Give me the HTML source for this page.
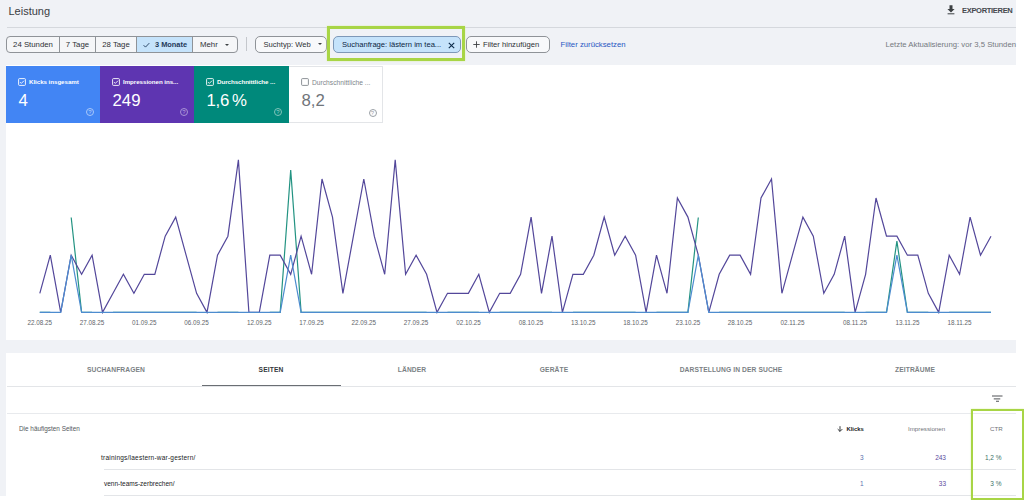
<!DOCTYPE html>
<html><head><meta charset="utf-8">
<style>
*{margin:0;padding:0;box-sizing:border-box}
html,body{width:1024px;height:500px;overflow:hidden;background:#fff;font-family:"Liberation Sans",sans-serif}
.abs{position:absolute;white-space:nowrap}
#page{position:absolute;left:0;top:0;width:1016px;height:496px;background:#f0f2f6}
.title{left:8.5px;top:3.8px;font-size:11px;color:#3a3d42;line-height:14px}
.hsep{left:7px;top:27px;width:1009px;height:1px;background:#d5d8dd}
.exp{left:962px;top:5.6px;font-size:7.55px;font-weight:bold;color:#45494e;letter-spacing:-0.33px;line-height:9px}
.seg{left:6px;top:36px;width:232px;height:16.5px;border:1px solid #8f9398;border-radius:4px;background:#f5f6f8;overflow:hidden}
.segi{position:absolute;top:0;height:100%;font-size:7.8px;color:#2d3034;line-height:16px;text-align:center}
.segd{position:absolute;top:0;width:1px;height:100%;background:#8f9398;z-index:1}
.chip{top:36px;height:16.5px;border:1px solid #8f9398;border-radius:5px;font-size:7.6px;color:#2d3034;line-height:16.5px}
.card{position:absolute;top:65.5px;height:57.3px}
.card .lbl{position:absolute;left:23px;top:12.6px;font-size:6.2px;line-height:8px;font-weight:bold;letter-spacing:-0.05px}
.card .val{position:absolute;left:12.5px;top:25.2px;font-size:16.8px;line-height:20px}
.cb{position:absolute;left:13.5px;top:14px;width:6px;height:6px;border:0.9px solid;border-radius:1px}
.help{position:absolute;top:42.5px;width:8px;height:8px;border:0.9px solid;border-radius:50%;font-size:6px;line-height:6.5px;text-align:center}
.tab{position:absolute;top:365px;font-size:6.7px;color:#7b7f84;font-weight:bold;transform:translateX(-50%);line-height:9px;letter-spacing:0.1px}
.th{top:425px;font-size:6.2px;color:#6f7378;line-height:8px}
.td{font-size:6.5px;line-height:8px}
</style></head><body>
<div id="page"></div>
<div class="abs title">Leistung</div>
<div class="abs hsep"></div>
<svg class="abs" style="left:946px;top:5px" width="10" height="10" viewBox="0 0 10 10"><path d="M3.5 0.3h3v3.8h2.1L5 7.6 1.4 4.1h2.1z" fill="#3c4043"/><rect x="1.6" y="8.3" width="6.8" height="1" fill="#3c4043"/></svg>
<div class="abs exp">EXPORTIEREN</div>

<div class="abs seg">
  <div class="segi" style="left:0;width:52px">24 Stunden</div>
  <div class="segd" style="left:51.5px"></div>
  <div class="segi" style="left:53px;width:35px">7 Tage</div>
  <div class="segd" style="left:87.6px"></div>
  <div class="segi" style="left:89px;width:40px">28 Tage</div>
  <div class="segd" style="left:128.6px"></div>
  <div class="segi" style="left:129px;width:56.5px;background:#c5e3fb;font-weight:bold;color:#1f3a5a"><svg style="position:absolute;left:6.5px;top:5px" width="7" height="6" viewBox="0 0 7 6"><path d="M0.6 3.2l1.9 1.9L6.3 1.1" fill="none" stroke="#1f3a5a" stroke-width="0.9"/></svg><span style="position:absolute;left:19px;font-size:7.4px">3 Monate</span></div>
  <div class="segd" style="left:185.3px"></div>
  <div class="segi" style="left:187px;width:45px;text-align:left;padding-left:6px">Mehr <span style="position:absolute;left:31px;top:6.5px;width:0;height:0;border-left:2.2px solid transparent;border-right:2.2px solid transparent;border-top:2.2px solid #3c4043"></span></div>
</div>
<div class="abs" style="left:246px;top:37px;width:1px;height:14px;background:#c4c7cc"></div>
<div class="abs chip" style="left:254.5px;width:72.5px;background:#f8f9fb;padding-left:8px">Suchtyp: Web<span style="position:absolute;left:62px;top:6px;width:0;height:0;border-left:2.2px solid transparent;border-right:2.2px solid transparent;border-top:2.2px solid #3c4043"></span></div>
<div class="abs" style="left:326.5px;top:25.5px;width:138px;height:35px;border:3px solid #a8d546;box-shadow:0 0 1.5px #d9efa0"></div>
<div class="abs chip" style="left:333px;width:127.5px;background:#c5e3fb;border-color:#7d98b8;color:#0a2342;padding-left:8px">Suchanfrage: lästern im tea...<svg style="position:absolute;left:113.8px;top:4.8px" width="7" height="7" viewBox="0 0 7 7"><path d="M0.8 0.8l5.4 5.4M6.2 0.8L0.8 6.2" stroke="#0b2a4a" stroke-width="1.1"/></svg></div>
<div class="abs chip" style="left:465.5px;width:84px;background:#f8f9fb;padding-left:16.5px"><svg style="position:absolute;left:6px;top:4px" width="7" height="7" viewBox="0 0 7 7"><path d="M3.5 0.3v6.4M0.3 3.5h6.4" stroke="#3c4043" stroke-width="0.9"/></svg>Filter hinzufügen</div>
<div class="abs" style="left:560.5px;top:40px;font-size:7.75px;color:#1f57c3;line-height:9px">Filter zurücksetzen</div>
<div class="abs" style="left:885.5px;top:40px;font-size:7.75px;color:#75797e;line-height:9px">Letzte Aktualisierung: vor 3,5 Stunden</div>

<!-- chart card -->
<div class="abs" style="left:6px;top:65px;width:1010px;height:275px;background:#fff"></div>
<div class="card" style="left:6px;width:94px;background:#4285f4;color:#fff">
  <svg style="position:absolute;left:12.2px;top:12.4px" width="8" height="8" viewBox="0 0 8 8"><rect x="0.6" y="0.6" width="6.8" height="6.8" rx="0.8" fill="none" stroke="#fff" stroke-width="0.9"/><path d="M2 4.1l1.3 1.3L6 2.7" fill="none" stroke="#fff" stroke-width="0.9"/></svg><div class="lbl">Klicks insgesamt</div><div class="val">4</div><div class="help" style="left:79.8px;border-color:#a9c8fa;color:#b9d2fb">?</div>
</div>
<div class="card" style="left:100px;width:94px;background:#5e35b1;color:#fff">
  <svg style="position:absolute;left:12.2px;top:12.4px" width="8" height="8" viewBox="0 0 8 8"><rect x="0.6" y="0.6" width="6.8" height="6.8" rx="0.8" fill="none" stroke="#fff" stroke-width="0.9"/><path d="M2 4.1l1.3 1.3L6 2.7" fill="none" stroke="#fff" stroke-width="0.9"/></svg><div class="lbl">Impressionen ins...</div><div class="val">249</div><div class="help" style="left:79.8px;border-color:#a993d6;color:#b8a6de">?</div>
</div>
<div class="card" style="left:194px;width:95px;background:#00897b;color:#fff">
  <svg style="position:absolute;left:12.2px;top:12.4px" width="8" height="8" viewBox="0 0 8 8"><rect x="0.6" y="0.6" width="6.8" height="6.8" rx="0.8" fill="none" stroke="#fff" stroke-width="0.9"/><path d="M2 4.1l1.3 1.3L6 2.7" fill="none" stroke="#fff" stroke-width="0.9"/></svg><div class="lbl">Durchschnittliche ...</div><div class="val" style="letter-spacing:-0.3px;word-spacing:-1.3px">1,6 %</div><div class="help" style="left:79.8px;border-color:#80c4ba;color:#99cfc7">?</div>
</div>
<div class="card" style="left:289px;width:93.5px;background:#fff;color:#5f6368;border:1px solid #e3e5e8;border-left:none">
  <svg style="position:absolute;left:12.2px;top:11.8px" width="8" height="8" viewBox="0 0 8 8"><rect x="0.6" y="0.6" width="6.8" height="6.8" rx="0.8" fill="none" stroke="#80868b" stroke-width="0.9"/></svg><div class="lbl" style="color:#80868b;font-weight:normal;font-size:6.7px;letter-spacing:0;top:12.2px">Durchschnittliche ...</div><div class="val" style="color:#70757a;top:24.5px">8,2</div><div class="help" style="left:79.5px;top:42px;border-color:#9aa0a6;color:#9aa0a6">?</div>
</div>

<svg class="abs" style="left:0;top:0" width="1024" height="340" viewBox="0 0 1024 340">
<g fill="none" stroke-linejoin="miter" stroke-width="1.2">
<path d="M39.8,312.4 L50.3,312.4 M71.2,217.5 L81.6,312.4 L92.1,312.4 M113.0,312.4 L123.4,312.4 L133.9,312.4 L144.3,312.4 L154.8,312.4 L165.2,312.4 L175.7,312.4 L186.1,312.4 L196.6,312.4 M217.5,312.4 L227.9,312.4 L238.4,312.4 M269.8,312.4 L280.2,312.4 L290.7,170.1 L301.1,312.4 L311.6,312.4 L322.0,312.4 L332.5,312.4 L342.9,312.4 L353.4,312.4 L363.8,312.4 L374.3,312.4 L384.7,312.4 L395.2,312.4 L405.6,312.4 L416.1,312.4 L426.6,312.4 M447.5,312.4 L457.9,312.4 L468.4,312.4 L478.8,312.4 M499.7,312.4 L510.2,312.4 L520.6,312.4 L531.1,312.4 L541.5,312.4 L552.0,312.4 M572.9,312.4 L583.3,312.4 L593.8,312.4 L604.2,312.4 L614.7,312.4 L625.2,312.4 L635.6,312.4 M656.5,312.4 L667.0,312.4 L677.4,312.4 L687.9,312.4 L698.3,217.5 M719.2,312.4 L729.7,312.4 L740.1,312.4 L750.6,312.4 L761.0,312.4 L771.5,312.4 L781.9,312.4 L792.4,312.4 L802.9,312.4 L813.3,312.4 L823.8,312.4 L834.2,312.4 L844.7,312.4 M865.6,312.4 L876.0,312.4 L886.5,312.4 L896.9,241.2 L907.4,312.4 L917.8,312.4 L928.3,312.4 M949.2,312.4 L959.6,312.4 L970.1,312.4 L980.5,312.4 L991.0,312.4" stroke="#239382"/>
<polyline points="39.8,293.3 50.3,255.2 60.7,312.4 71.2,255.2 81.6,274.3 92.1,255.2 102.5,312.4 113.0,293.3 123.4,274.3 133.9,293.3 144.3,274.3 154.8,274.3 165.2,236.2 175.7,217.1 186.1,255.2 196.6,293.3 207.0,312.4 217.5,255.2 227.9,236.2 238.4,159.9 248.9,312.4 259.3,312.4 269.8,255.2 280.2,255.2 290.7,274.3 301.1,236.2 311.6,274.3 322.0,179.0 332.5,217.1 342.9,293.3 353.4,236.2 363.8,179.0 374.3,236.2 384.7,274.3 395.2,159.9 405.6,274.3 416.1,255.2 426.6,274.3 437.0,312.4 447.5,293.3 457.9,293.3 468.4,293.3 478.8,274.3 489.3,312.4 499.7,293.3 510.2,293.3 520.6,274.3 531.1,217.1 541.5,293.3 552.0,236.2 562.4,312.4 572.9,274.3 583.3,274.3 593.8,255.2 604.2,217.1 614.7,255.2 625.2,236.2 635.6,255.2 646.1,312.4 656.5,255.2 667.0,293.3 677.4,198.0 687.9,217.1 698.3,255.2 708.8,312.4 719.2,274.3 729.7,255.2 740.1,255.2 750.6,274.3 761.0,198.0 771.5,179.0 781.9,293.3 792.4,255.2 802.9,217.1 813.3,236.2 823.8,293.3 834.2,274.3 844.7,236.2 855.1,312.4 865.6,274.3 876.0,198.0 886.5,236.2 896.9,236.2 907.4,255.2 917.8,255.2 928.3,293.3 938.7,312.4 949.2,255.2 959.6,274.3 970.1,217.1 980.5,255.2 991.0,236.2" stroke="#53479a"/>
<polyline points="39.8,312.4 50.3,312.4 60.7,312.4 71.2,255.2 81.6,312.4 92.1,312.4 102.5,312.4 113.0,312.4 123.4,312.4 133.9,312.4 144.3,312.4 154.8,312.4 165.2,312.4 175.7,312.4 186.1,312.4 196.6,312.4 207.0,312.4 217.5,312.4 227.9,312.4 238.4,312.4 248.9,312.4 259.3,312.4 269.8,312.4 280.2,312.4 290.7,255.2 301.1,312.4 311.6,312.4 322.0,312.4 332.5,312.4 342.9,312.4 353.4,312.4 363.8,312.4 374.3,312.4 384.7,312.4 395.2,312.4 405.6,312.4 416.1,312.4 426.6,312.4 437.0,312.4 447.5,312.4 457.9,312.4 468.4,312.4 478.8,312.4 489.3,312.4 499.7,312.4 510.2,312.4 520.6,312.4 531.1,312.4 541.5,312.4 552.0,312.4 562.4,312.4 572.9,312.4 583.3,312.4 593.8,312.4 604.2,312.4 614.7,312.4 625.2,312.4 635.6,312.4 646.1,312.4 656.5,312.4 667.0,312.4 677.4,312.4 687.9,312.4 698.3,255.2 708.8,312.4 719.2,312.4 729.7,312.4 740.1,312.4 750.6,312.4 761.0,312.4 771.5,312.4 781.9,312.4 792.4,312.4 802.9,312.4 813.3,312.4 823.8,312.4 834.2,312.4 844.7,312.4 855.1,312.4 865.6,312.4 876.0,312.4 886.5,312.4 896.9,255.2 907.4,312.4 917.8,312.4 928.3,312.4 938.7,312.4 949.2,312.4 959.6,312.4 970.1,312.4 980.5,312.4 991.0,312.4" stroke="#4d8ccf"/>
</g>
<g font-family="Liberation Sans" font-size="6.3" fill="#62666b" text-anchor="middle"><text x="39.8" y="325.0">22.08.25</text><text x="92.1" y="325.0">27.08.25</text><text x="144.3" y="325.0">01.09.25</text><text x="196.6" y="325.0">06.09.25</text><text x="259.3" y="325.0">12.09.25</text><text x="311.6" y="325.0">17.09.25</text><text x="363.8" y="325.0">22.09.25</text><text x="416.1" y="325.0">27.09.25</text><text x="468.4" y="325.0">02.10.25</text><text x="531.1" y="325.0">08.10.25</text><text x="583.3" y="325.0">13.10.25</text><text x="635.6" y="325.0">18.10.25</text><text x="687.9" y="325.0">23.10.25</text><text x="740.1" y="325.0">28.10.25</text><text x="792.4" y="325.0">02.11.25</text><text x="855.1" y="325.0">08.11.25</text><text x="907.4" y="325.0">13.11.25</text><text x="959.6" y="325.0">18.11.25</text></g>
</svg>

<!-- table card -->
<div class="abs" style="left:6px;top:352.8px;width:1010px;height:143.2px;background:#fff"></div>
<div class="abs" style="left:6.5px;top:385.7px;width:1009.5px;height:1px;background:#e3e5e8"></div>
<div class="abs" style="left:201.5px;top:384.6px;width:139px;height:1.7px;background:#6a6e73"></div>
<div class="tab" style="left:116px">SUCHANFRAGEN</div>
<div class="tab" style="left:271px;color:#33373b;font-weight:bold">SEITEN</div>
<div class="tab" style="left:412px">LÄNDER</div>
<div class="tab" style="left:554px">GERÄTE</div>
<div class="tab" style="left:731px">DARSTELLUNG IN DER SUCHE</div>
<div class="tab" style="left:915px">ZEITRÄUME</div>
<svg class="abs" style="left:991px;top:394.5px" width="13" height="8" viewBox="0 0 13 8"><path d="M1 1h10.5M2.75 3.9h6.5M5 6.25h3" stroke="#3c4043" stroke-width="0.9"/></svg>
<div class="abs" style="left:6.5px;top:413px;width:1009.5px;height:1px;background:#e8eaed"></div>
<div class="abs th" style="left:19px;font-size:6.4px;color:#54585d">Die häufigsten Seiten</div>
<svg class="abs" style="left:836.8px;top:425.8px" width="6" height="6" viewBox="0 0 6 6"><path d="M3 0.2v5.2M0.7 3.1L3 5.4 5.3 3.1" fill="none" stroke="#2d3034" stroke-width="0.95"/></svg><div class="abs th" style="right:160.2px;color:#202124;font-weight:bold;font-size:5.9px;top:425px">Klicks</div>
<div class="abs th" style="left:908px">Impressionen</div>
<div class="abs th" style="left:990px">CTR</div>
<div class="abs td" style="left:101px;top:453.8px;color:#202124;letter-spacing:0.22px">trainings/laestern-war-gestern/</div>
<div class="abs td" style="right:160.5px;top:454px;color:#5a6fae">3</div>
<div class="abs td" style="right:78px;top:454px;color:#5b4a9e">243</div>
<div class="abs td" style="right:22.5px;top:454px;color:#3d7268">1,2 %</div>
<div class="abs" style="left:104px;top:469px;width:912px;height:1px;background:#e3e5e8"></div>
<div class="abs td" style="left:104px;top:479.5px;color:#202124">venn-teams-zerbrechen/</div>
<div class="abs td" style="right:160.5px;top:479.7px;color:#5a6fae">1</div>
<div class="abs td" style="right:78px;top:479.7px;color:#5b4a9e">33</div>
<div class="abs td" style="right:22.5px;top:479.7px;color:#3d7268">3 %</div>
<div class="abs" style="left:104px;top:495px;width:912px;height:1px;background:#e3e5e8"></div>
<div class="abs" style="left:971px;top:408.5px;width:52.5px;height:91px;border:2.7px solid #a8d546;box-shadow:0 0 1.5px #d9efa0"></div>
</body></html>
